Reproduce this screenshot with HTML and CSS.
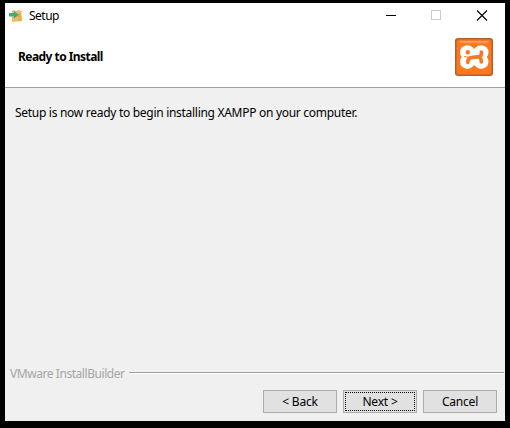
FILE: index.html
```html
<!DOCTYPE html>
<html lang="en">
<head>
<meta charset="utf-8">
<title>Setup</title>
<link rel="stylesheet" href="styles.css">
</head>
<body>
<main class="window">
  <header class="titlebar">
    <svg class="app-icon" width="14" height="14" viewBox="0 0 14 14">
      <path d="M3 2l2-1 2 1 3-1 3 1-1 3 1 7-10 1z" fill="#f2bd62"/>
      <path d="M9 5l3-1 1 8-4 0z" fill="#e9ad4d"/>
      <path d="M0 4h5V2l5 3.7L5 9.5V7.5H0z" fill="#42ad82"/>
    </svg>
    <span class="title">Setup</span>
    <svg class="controls" width="102" height="11" viewBox="0 0 102 11" fill="none" shape-rendering="crispEdges">
      <path d="M0 5.5h10" stroke="#000"/>
      <path d="M45.5.5h9v9h-9z" stroke="#ccc"/>
      <path d="M91 .5l10 10M101 .5l-10 10" stroke="#000" stroke-width="1.1" shape-rendering="auto"/>
    </svg>
  </header>
  <section class="banner">
    <h1>Ready to Install</h1>
    <svg class="logo" width="38" height="38" viewBox="0 0 38 38">
      <defs>
        <linearGradient id="shine" x2="0" y2="1">
          <stop stop-color="#fff" stop-opacity=".4"/>
          <stop offset="1" stop-color="#fff" stop-opacity="0"/>
        </linearGradient>
      </defs>
      <rect width="38" height="38" rx="3" fill="#b3602a"/>
      <rect x="1" y="1" width="36" height="36" rx="2.5" fill="#df6a1d"/>
      <rect x="2" y="2" width="34" height="34" rx="2" fill="#fa7820"/>
      <path d="M4 3h30q-1 3-5 3H9Q5 6 4 3z" fill="url(#shine)"/>
      <g fill="#fff">
        <circle cx="12.3" cy="14.5" r="7.3"/><circle cx="26.2" cy="14.5" r="7.3"/>
        <circle cx="12.3" cy="23.7" r="7.3"/><circle cx="26.2" cy="23.7" r="7.3"/>
        <path d="M15 10.5h9v17h-9z"/>
      </g>
      <g fill="none" stroke="#fa7820" stroke-width="3.6" stroke-linecap="round" stroke-linejoin="round">
        <path d="M26.3 14v2q0 2.7-3 2.9l-6 .5q-4.5.6-4.5 5M24.5 19.3q1.8 1 1.8 4.7"/>
        <path d="M12.8 14.3v.1" stroke-width="4.4"/>
        <path d="M9.5 18.6q3 .9 6 .6" stroke-width="1"/>
      </g>
    </svg>
  </section>
  <section class="content"><p>Setup is now ready to begin installing XAMPP on your computer.</p></section>
  <div class="brand"><span>VMware InstallBuilder</span><i class="rule"></i></div>
  <footer class="actions">
    <button><span class="back">&lt; Back</span></button>
    <button class="focused"><span class="next">Next &gt;</span></button>
    <button><span class="cancel">Cancel</span></button>
  </footer>
</main>
</body>
</html>
```
FILE: styles.css
```css
* { box-sizing: border-box; }
body {
  margin: 0;
  width: 510px;
  height: 428px;
  padding: 3px 5px 7px;
  background: #000;
  overflow: hidden;
  font: 12px/16px "Noto Sans", "Open Sans", sans-serif;
  color: #000;
}
.window {
  display: flex;
  flex-direction: column;
  width: 500px;
  height: 418px;
  background: #f0f0f0;
}
.titlebar {
  display: flex;
  align-items: center;
  height: 25px;
  padding: 0 17px 0 4px;
  background: #fff;
}
.app-icon { margin-right: 6px; }
.title { letter-spacing: -.5px; }
.controls { margin-left: auto; }
.banner {
  display: flex;
  justify-content: space-between;
  height: 60px;
  padding: 10px 12px 0 13px;
  background: #fff;
  border-bottom: 1px solid #a0a0a0;
}
h1 {
  margin: 11px 0 0;
  font-size: 12px;
  line-height: 16px;
  letter-spacing: -.55px;
}
.content { flex: 1; padding: 17px 10px; }
.content p { margin: 0; letter-spacing: -.29px; white-space: nowrap; }
.brand {
  display: flex;
  align-items: center;
  height: 16px;
  padding: 0 1px 0 5px;
  margin-bottom: 8px;
  color: #a6a6a6;
  letter-spacing: -.44px;
}
.rule {
  flex: 1;
  height: 2px;
  margin: 0 0 2px 4px;
  background: linear-gradient(#a0a0a0 50%, #fff 50%);
}
.actions {
  display: flex;
  justify-content: flex-end;
  gap: 6px;
  padding: 0 8px 8px 0;
}
button {
  display: flex;
  align-items: center;
  justify-content: center;
  width: 74px;
  height: 23px;
  padding: 0;
  border: 1px solid #adadad;
  border-radius: 0;
  background: #e1e1e1;
  color: #000;
  font: inherit;
  letter-spacing: -.2px;
}
.focused { padding: 1px; }
.focused span {
  display: flex;
  align-items: center;
  justify-content: center;
  width: 100%;
  height: 100%;
  border: 1px dotted #000;
}
```
